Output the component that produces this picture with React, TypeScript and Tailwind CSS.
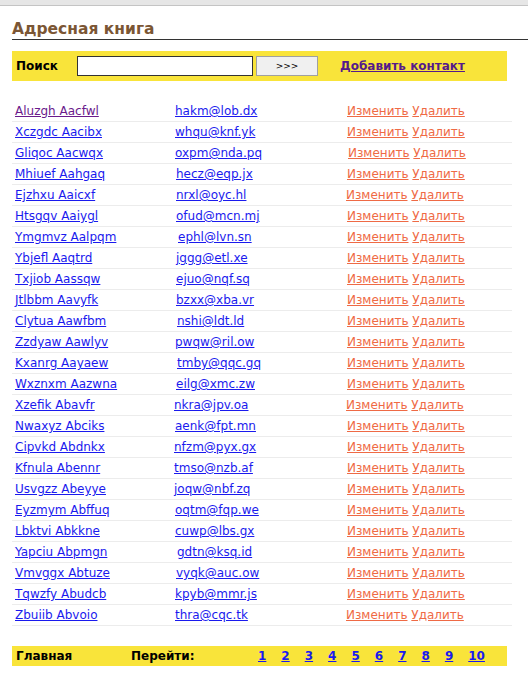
import React from "react";

const rows: [string, string][] = [
  ["Aluzgh Aacfwl", "hakm@lob.dx"],
  ["Xczgdc Aacibx", "whqu@knf.yk"],
  ["Gliqoc Aacwqx", "oxpm@nda.pq"],
  ["Mhiuef Aahgaq", "hecz@eqp.jx"],
  ["Ejzhxu Aaicxf", "nrxl@oyc.hl"],
  ["Htsgqv Aaiygl", "ofud@mcn.mj"],
  ["Ymgmvz Aalpqm", "ephl@lvn.sn"],
  ["Ybjefl Aaqtrd", "jggg@etl.xe"],
  ["Txjiob Aassqw", "ejuo@nqf.sq"],
  ["Jtlbbm Aavyfk", "bzxx@xba.vr"],
  ["Clytua Aawfbm", "nshi@ldt.ld"],
  ["Zzdyaw Aawlyv", "pwqw@ril.ow"],
  ["Kxanrg Aayaew", "tmby@qqc.gq"],
  ["Wxznxm Aazwna", "eilg@xmc.zw"],
  ["Xzefik Abavfr", "nkra@jpv.oa"],
  ["Nwaxyz Abciks", "aenk@fpt.mn"],
  ["Cipvkd Abdnkx", "nfzm@pyx.gx"],
  ["Kfnula Abennr", "tmso@nzb.af"],
  ["Usvgzz Abeyye", "joqw@nbf.zq"],
  ["Eyzmym Abffuq", "oqtm@fqp.we"],
  ["Lbktvi Abkkne", "cuwp@lbs.gx"],
  ["Yapciu Abpmgn", "gdtn@ksq.id"],
  ["Vmvggx Abtuze", "vyqk@auc.ow"],
  ["Tqwzfy Abudcb", "kpyb@mmr.js"],
  ["Zbuiib Abvoio", "thra@cqc.tk"],
];

const emailOffsets = [0, 0, 0, 1, 1, 1, 3, 1, 1, 1, 2, 0, 2, 1, -1, 0, -1, -1, -1, 0, 0, 2, 1, 0, 0];
const actionOffsets = [0, 0, 1, 0, -1, 0, 0, 0, 0, 0, 0, 0, 0, 0, -1, 0, 0, 0, 0, 0, 0, 0, 0, 0, -1];

export default function App() {
  return (
    <div
      className="w-[528px] min-h-[682px] bg-white text-black"
      style={{ fontFamily: '"DejaVu Sans", Verdana, sans-serif' }}
    >
      <div className="h-[6px] bg-[#e6e6e6] border-b border-[#c4c4c4]" />
      <div className="pl-[12px]">
        <h2 className="mt-[14px] text-[15.5px] leading-[19px] font-bold text-[#7b5634] border-b border-[#333333] pb-0">
          Адресная книга
        </h2>
        <div className="mt-[11px] w-[495px] h-[30px] bg-[#f9e43a] flex items-center text-[12px]">
          <span className="ml-[4px] w-[61px] font-bold">Поиск</span>
          <input
            className="w-[176px] h-[20px] bg-white border border-[#333333] outline-none"
            type="text"
          />
          <button className="ml-[3px] w-[62px] h-[20px] bg-[#f0f0f0] border border-[#a0a0a0] text-[9px] leading-none">
            &gt;&gt;&gt;
          </button>
          <a href="#" className="ml-[22px] font-bold underline text-[#551a8b]">
            Добавить контакт
          </a>
        </div>
        <div className="mt-[20px] w-[500px] text-[12px]">
          {rows.map(([name, email], i) => (
            <div
              key={name}
              className="h-[21px] flex items-center border-b border-[#ececec]"
            >
              <div className="w-[160px] pl-[3px]">
                <a
                  href="#"
                  className={
                    "underline " + (i === 0 ? "text-[#6a1a8b]" : "text-[#1a1aee]")
                  }
                >
                  {name}
                </a>
              </div>
              <div className="w-[172px] pl-[3px]">
                <a
                  href="#"
                  className="underline text-[#1a1aee]"
                  style={{ marginLeft: emailOffsets[i] }}
                >
                  {email}
                </a>
              </div>
              <div
                className="pl-[3px] text-[#ef6a45]"
                style={{ marginLeft: actionOffsets[i] }}
              >
                <a href="#" className="underline">
                  Изменить
                </a>{" "}
                <a href="#" className="underline">
                  Удалить
                </a>
              </div>
            </div>
          ))}
        </div>
        <div className="mt-[20px] w-[495px] h-[20px] bg-[#f9e43a] flex items-center text-[12px] font-bold">
          <span className="ml-[4px] w-[115px]">Главная</span>
          <span className="w-[127px]">Перейти:</span>
          <div className="flex gap-[15px]">
            {["1", "2", "3", "4", "5", "6", "7", "8", "9", "10"].map((n) => (
              <a key={n} href="#" className="underline text-[#1a1aee]">
                {n}
              </a>
            ))}
          </div>
        </div>
      </div>
    </div>
  );
}
